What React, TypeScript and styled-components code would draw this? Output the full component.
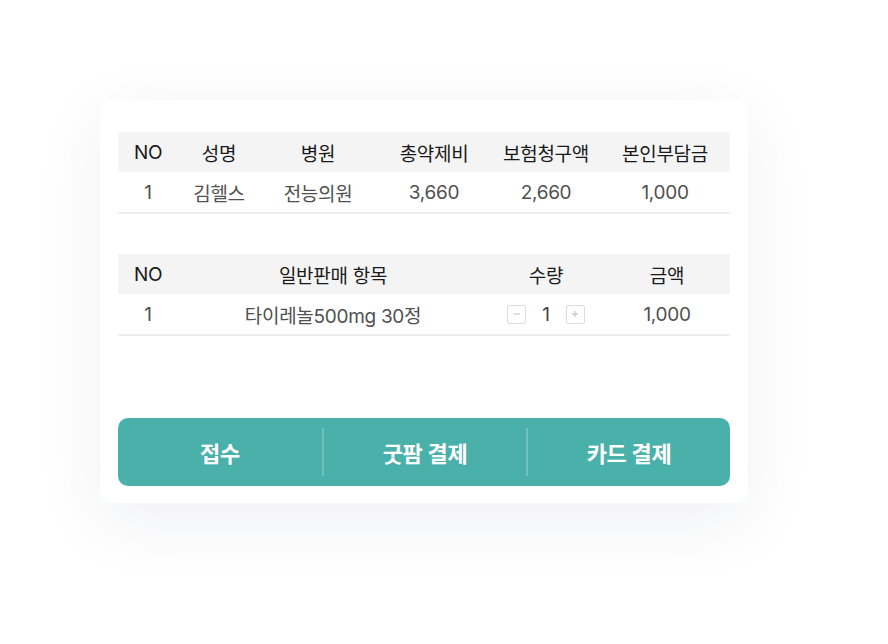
import React from 'react';
import styled, { createGlobalStyle } from 'styled-components';

const GlobalStyle = createGlobalStyle`
    html, body {
        margin: 0;
        padding: 0;
        background: #ffffff;
    }
    body {
        font-family: "Inter", "Noto Sans CJK KR", sans-serif;
    }
`;

const Page = styled.div`
    width: 888px;
    height: 644px;
    padding: 100px 0 0 100px;
    box-sizing: border-box;
`;

const Card = styled.div`
    width: 648px;
    box-sizing: border-box;
    padding: 32px 18px 17px;
    background: #ffffff;
    border-radius: 12px;
    box-shadow: 0 18px 70px rgba(30, 40, 80, 0.07);
    display: flex;
    flex-direction: column;
`;

const Table = styled.div<{ $cols: string; $gap?: number }>`
    display: grid;
    grid-template-columns: ${p => p.$cols};
    margin-bottom: ${p => p.$gap ?? 0}px;
    border-bottom: 2px solid #eeeeee;
`;

const Head = styled.div`
    height: 40px;
    background: #f4f4f4;
    display: flex;
    align-items: center;
    justify-content: center;
    font-size: 19px;
    font-weight: 400;
    color: #1a1a1a;
    letter-spacing: -0.3px;
`;

const Cell = styled.div`
    height: 40px;
    display: flex;
    align-items: center;
    justify-content: center;
    font-size: 19px;
    color: #505050;
    letter-spacing: -0.3px;
`;

const Stepper = styled.div`
    display: flex;
    align-items: center;
    gap: 16px;
    color: #444;
`;

const StepBtn = styled.span`
    width: 19px;
    height: 19px;
    box-sizing: border-box;
    border: 1.5px solid #dddddd;
    border-radius: 2px;
    display: flex;
    align-items: center;
    justify-content: center;
    color: #cccccc;
`;

const ActionBar = styled.div`
    height: 68px;
    border-radius: 10px;
    background: #4ab0aa;
    display: grid;
    grid-template-columns: repeat(3, 1fr);
    align-items: center;
`;

const Action = styled.button<{ $divider?: boolean }>`
    height: 48px;
    border: none;
    background: transparent;
    border-left: ${p => (p.$divider ? '2px solid rgba(255,255,255,0.22)' : 'none')};
    color: #ffffff;
    font-family: inherit;
    font-size: 22px;
    font-weight: 700;
    letter-spacing: -0.3px;
    cursor: pointer;
`;

const Minus = () => (
    <svg width="10" height="10" viewBox="0 0 10 10">
        <path d="M2 5h6" stroke="currentColor" strokeWidth="1.3" />
    </svg>
);

const Plus = () => (
    <svg width="10" height="10" viewBox="0 0 10 10">
        <path d="M2 5h6M5 2v6" stroke="currentColor" strokeWidth="1.3" />
    </svg>
);

const App = () => {
    return (
        <Page>
            <GlobalStyle />
            <Card>
                <Table $cols="60px 82px 116px 116px 108px 130px" $gap={40}>
                    <Head>NO</Head>
                    <Head>성명</Head>
                    <Head>병원</Head>
                    <Head>총약제비</Head>
                    <Head>보험청구액</Head>
                    <Head>본인부담금</Head>
                    <Cell>1</Cell>
                    <Cell>김헬스</Cell>
                    <Cell>전능의원</Cell>
                    <Cell>3,660</Cell>
                    <Cell>2,660</Cell>
                    <Cell>1,000</Cell>
                </Table>

                <Table $cols="60px 310px 116px 126px" $gap={82}>
                    <Head>NO</Head>
                    <Head>일반판매 항목</Head>
                    <Head>수량</Head>
                    <Head>금액</Head>
                    <Cell>1</Cell>
                    <Cell>타이레놀500mg 30정</Cell>
                    <Cell>
                        <Stepper>
                            <StepBtn><Minus /></StepBtn>
                            <span>1</span>
                            <StepBtn><Plus /></StepBtn>
                        </Stepper>
                    </Cell>
                    <Cell>1,000</Cell>
                </Table>

                <ActionBar>
                    <Action>접수</Action>
                    <Action $divider>굿팜 결제</Action>
                    <Action $divider>카드 결제</Action>
                </ActionBar>
            </Card>
        </Page>
    );
};

export default App;
